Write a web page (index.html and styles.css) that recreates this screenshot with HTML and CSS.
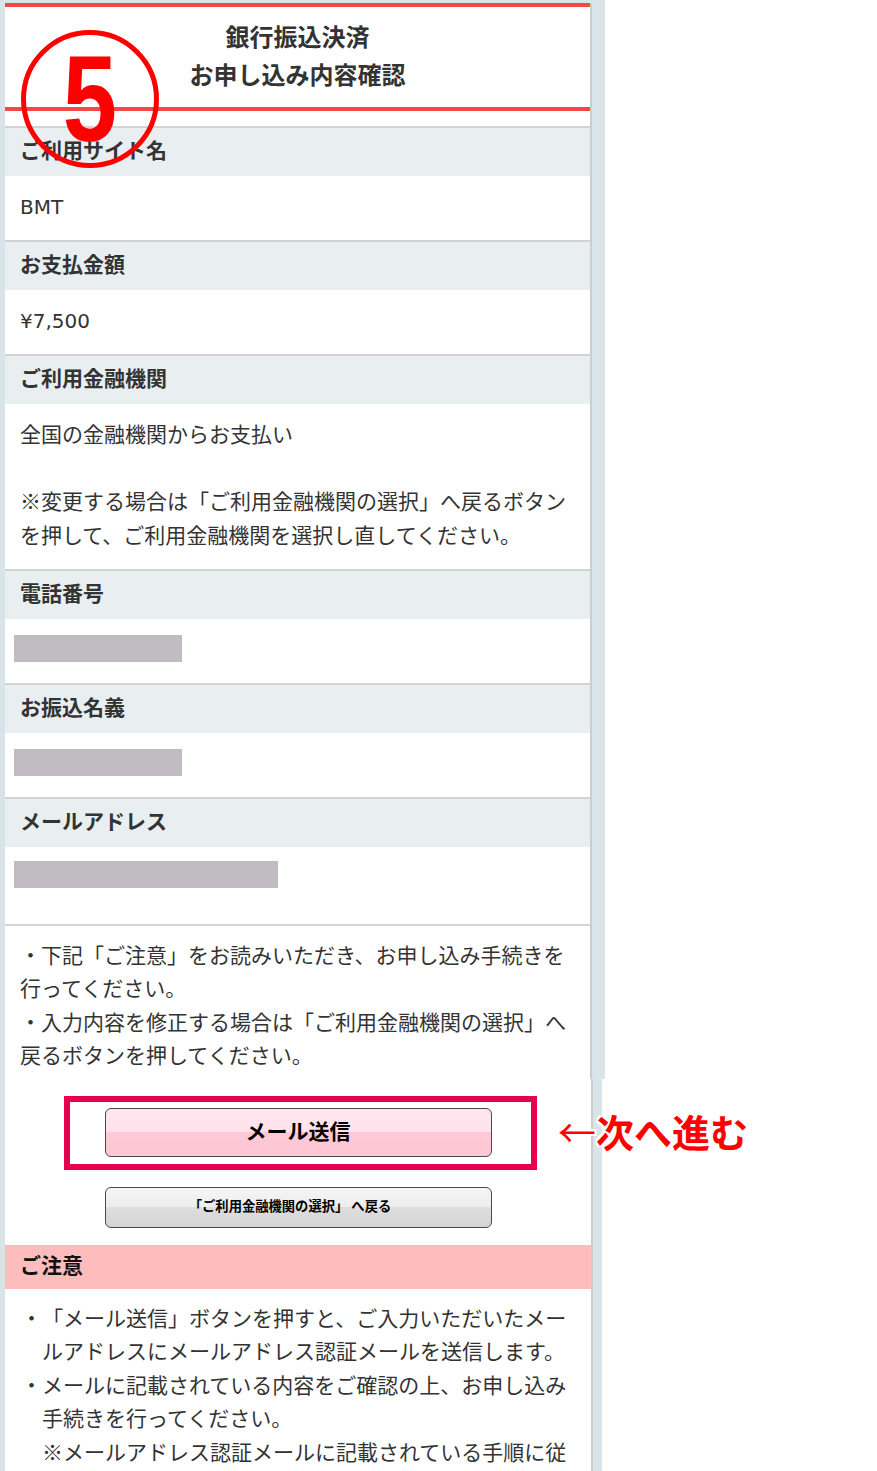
FILE: index.html
```html
<!DOCTYPE html>
<html lang="ja">
<head>
<meta charset="utf-8">
<title>銀行振込決済 お申し込み内容確認</title>
<link rel="stylesheet" href="styles.css">
</head>
<body>
<div class="shot shot-top">
  <div class="main">
    <header class="title">
      <h1>銀行振込決済<br>お申し込み内容確認</h1>
    </header>
    <div class="step-mark"><span class="step-num">5</span></div>

    <section class="item">
      <h2 class="item-head">ご利用サイト名</h2>
      <div class="item-val latin">BMT</div>
    </section>
    <section class="item">
      <h2 class="item-head">お支払金額</h2>
      <div class="item-val latin">¥7,500</div>
    </section>
    <section class="item">
      <h2 class="item-head">ご利用金融機関</h2>
      <div class="item-val">全国の金融機関からお支払い<br><br>※変更する場合は「ご利用金融機関の選択」へ戻るボタンを押して、ご利用金融機関を選択し直してください。</div>
    </section>
    <section class="item">
      <h2 class="item-head">電話番号</h2>
      <div class="item-val masked"><span class="mask mask-short"></span></div>
    </section>
    <section class="item">
      <h2 class="item-head">お振込名義</h2>
      <div class="item-val masked"><span class="mask mask-short"></span></div>
    </section>
    <section class="item">
      <h2 class="item-head">メールアドレス</h2>
      <div class="item-val masked masked-mail"><span class="mask mask-long"></span></div>
    </section>
    <div class="notes">・下記「ご注意」をお読みいただき、お申し込み手続きを行ってください。<br>・入力内容を修正する場合は「ご利用金融機関の選択」へ戻るボタンを押してください。</div>
  </div>
</div>

<div class="shot shot-bottom">
  <div class="main">
    <div class="actions">
      <div class="btn-wrap">
        <button class="btn btn-send" type="button">メール送信</button>
        <span class="highlight"></span>
      </div>
      <button class="btn btn-back" type="button">「ご利用金融機関の選択」 へ戻る</button>
    </div>
    <h2 class="caution-head">ご注意</h2>
    <ul class="caution-list">
      <li>・「メール送信」ボタンを押すと、ご入力いただいたメールアドレスにメールアドレス認証メールを送信します。</li>
      <li>・メールに記載されている内容をご確認の上、お申し込み手続きを行ってください。<br>※メールアドレス認証メールに記載されている手順に従って、お申し込み手続きを完了してください。</li>
    </ul>
  </div>
  <div class="callout"><span class="callout-arrow">←</span>次へ進む</div>
</div>
</body>
</html>
```

FILE: styles.css
```css
* { box-sizing: border-box; }

html, body {
  margin: 0;
  padding: 0;
  background: #ffffff;
}

body {
  font-family: "Noto Sans CJK JP", "Noto Sans", sans-serif;
  color: #333333;
  font-size: 21px;
  text-spacing-trim: space-all;
}

.shot {
  position: relative;
  background: #d8e4e8;
}

.shot-top {
  width: 605px;
  padding: 3px 13px 0 5px;
}

.shot-bottom {
  width: 602px;
  padding: 0 9px 0 5px;
}

.main {
  position: relative;
  background: #ffffff;
  border-right: 2px solid #cdcdcd;
}

/* header */
.title {
  border-top: 4px solid #f4474b;
  border-bottom: 4px solid #f4474b;
  padding: 10px 0 14px;
  margin-bottom: 15px;
  text-align: center;
}

.title h1 {
  margin: 0;
  font-size: 24px;
  line-height: 38px;
  font-weight: 700;
  color: #333333;
}

.step-mark {
  position: absolute;
  left: 16px;
  top: 27px;
  width: 138px;
  height: 138px;
  border: 5px solid #ff0000;
  border-radius: 50%;
  display: flex;
  align-items: center;
  justify-content: center;
}

.step-num {
  font-family: "Liberation Sans", Arial, sans-serif;
  font-weight: 700;
  font-size: 122px;
  line-height: 1;
  color: #ff0000;
  transform: scaleX(0.8);
}

/* rows */
.item {
  border-top: 2px solid #d3d3d3;
}

.item-head {
  margin: 0;
  background: #e9eef1;
  padding: 4px 15px 10px;
  font-size: 21px;
  line-height: 34px;
  font-weight: 700;
  color: #333333;
}

.item-val {
  padding: 13px 15px 17.5px;
  line-height: 33.5px;
}

.item-val.latin {
  font-family: "DejaVu Sans", "Noto Sans CJK JP", sans-serif;
  font-size: 20px;
  padding-top: 14.5px;
  padding-bottom: 16px;
}

.item-val.masked {
  padding: 16px 15px 21px 9px;
  line-height: 0;
}

.item-val.masked-mail {
  padding-top: 14px;
  padding-bottom: 36px;
}

.mask {
  display: block;
  height: 27px;
  background: #c1bcc1;
}

.mask-short { width: 168px; }
.mask-long { width: 264px; }

.notes {
  border-top: 2px solid #d3d3d3;
  padding: 12px 15px 7px;
  line-height: 33.5px;
}

/* buttons */
.actions {
  padding: 29px 0 17px;
  display: flex;
  flex-direction: column;
  align-items: center;
  gap: 30px;
}

.btn-wrap {
  position: relative;
}

.btn {
  display: block;
  width: 387px;
  border: 1px solid #4a4a4a;
  border-radius: 6px;
  color: #000000;
  font-family: "Noto Sans CJK JP", sans-serif;
  font-weight: 700;
  margin: 0;
}

.btn-send {
  height: 49px;
  padding: 0 0 5px;
  font-size: 21px;
  background: linear-gradient(#ffe6ee 0%, #ffe3ec 49%, #ffc9d6 49%, #ffc6d4 100%);
}

.btn-back {
  height: 41px;
  padding: 0 16px 4px 0;
  font-size: 13.3px;
  background: linear-gradient(#f6f6f6 0%, #ececec 50%, #dedede 50%, #d5d5d5 100%);
}

.highlight {
  position: absolute;
  left: -41px;
  top: -12px;
  right: -45px;
  bottom: -13px;
  border: 6px solid #e8004e;
  pointer-events: none;
}

/* caution */
.caution-head {
  margin: 0;
  background: #febcbc;
  padding: 2px 15px 8px;
  font-size: 21px;
  line-height: 34px;
  font-weight: 700;
  color: #111111;
}

.caution-list {
  list-style: none;
  margin: 0;
  padding: 12px 15px 22px;
  line-height: 33.5px;
}

.caution-list li {
  padding-left: 22px;
  text-indent: -21px;
}

/* annotation */
.callout {
  position: absolute;
  left: 558px;
  top: 33px;
  font-size: 38px;
  line-height: 1;
  font-weight: 700;
  color: #ff0000;
  white-space: nowrap;
  text-shadow:
    2px 0 0 #fff, -2px 0 0 #fff, 0 2px 0 #fff, 0 -2px 0 #fff,
    2px 2px 0 #fff, -2px -2px 0 #fff, 2px -2px 0 #fff, -2px 2px 0 #fff;
}

.callout-arrow {
  font-weight: 400;
}
```
